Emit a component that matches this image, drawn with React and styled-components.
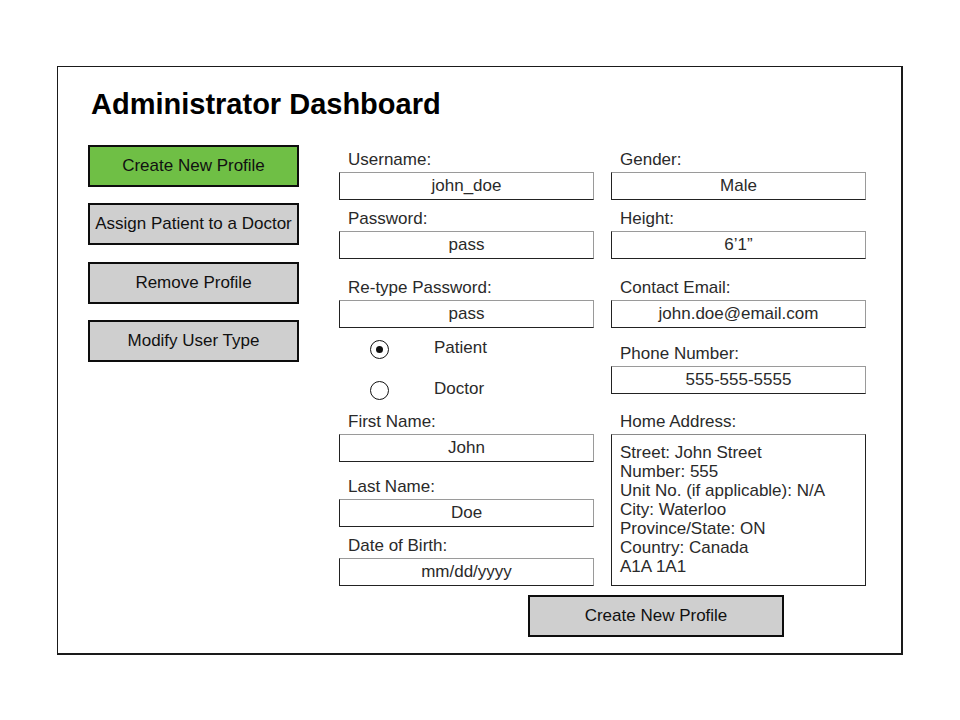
import React from "react";
import styled, { createGlobalStyle } from "styled-components";

const Global = createGlobalStyle`
  html, body { margin: 0; padding: 0; background: #fff; }
  body { font-family: "Liberation Sans", Arial, sans-serif; }
  * { box-sizing: border-box; }
`;

const Page = styled.div`
  width: 960px;
  height: 720px;
  padding: 66px 0 0 57px;
`;

const Frame = styled.div`
  width: 846px;
  height: 589px;
  border: 1px solid #1a1a1a;
  border-right-width: 2px;
  border-bottom-width: 2px;
  padding: 21px 0 0 33px;
  display: flex;
  flex-direction: column;
`;

const Title = styled.h1`
  margin: 0;
  font-size: 29px;
  line-height: 33px;
  font-weight: 700;
  color: #000;
`;

const Body = styled.div`
  display: flex;
  margin-top: 24px;
  margin-left: -3px;
`;

const Sidebar = styled.div`
  width: 211px;
  display: flex;
  flex-direction: column;
  gap: 16px;
`;

const Button = styled.button`
  width: ${(p) => p.$width || 211}px;
  height: 42px;
  border: 2px solid #0d0d0d;
  border-right-width: 2.5px;
  border-bottom-width: 2.5px;
  background: ${(p) => (p.$primary ? "#6fbf45" : "#cfcfcf")};
  font-family: "Liberation Sans", Arial, sans-serif;
  font-size: 17px;
  color: #111;
  padding: 0;
  cursor: pointer;
  margin-top: ${(p) => p.$mt || 0}px;
  margin-left: ${(p) => p.$ml || 0}px;
`;

const Form = styled.div`
  margin-left: 40px;
  padding-top: 5px;
  display: flex;
  flex-direction: column;
`;

const Columns = styled.div`
  display: flex;
  gap: 17px;
`;

const Column = styled.div`
  width: 255px;
  display: flex;
  flex-direction: column;
`;

const Label = styled.div`
  font-size: 17px;
  line-height: 20px;
  color: #2a2a2a;
  padding-left: 9px;
  margin-top: ${(p) => p.$mt || 0}px;
  margin-bottom: 2px;
`;

const Input = styled.div`
  height: 28px;
  border: 1px solid #222;
  border-top-color: #9a9a9a;
  border-right-color: #9a9a9a;
  display: flex;
  align-items: center;
  justify-content: center;
  font-size: 17px;
  color: #2a2a2a;
  background: #fff;
`;

const TextArea = styled.div`
  height: 152px;
  border: 1px solid #222;
  border-top-color: #8a8a8a;
  padding: 8px 8px 0 8px;
  font-size: 17px;
  line-height: 19px;
  color: #2a2a2a;
  white-space: pre-line;
`;

const RadioRow = styled.div`
  height: 20px;
  display: flex;
  align-items: center;
  padding-left: 31px;
  margin-top: ${(p) => p.$mt || 0}px;
  font-size: 17px;
  color: #2a2a2a;
`;

const Circle = styled.span`
  width: 19px;
  height: 19px;
  border-radius: 50%;
  border: 1px solid #111;
  display: flex;
  align-items: center;
  justify-content: center;
  margin-right: 45px;
  margin-top: 2px;
  &::after {
    content: "";
    display: ${(p) => (p.$checked ? "block" : "none")};
    width: 7px;
    height: 7px;
    border-radius: 50%;
    background: #111;
  }
`;

const Field = ({ label, value, mt }) => (
  <>
    <Label $mt={mt}>{label}</Label>
    <Input>{value}</Input>
  </>
);

export default function App() {
  return (
    <Page>
      <Global />
      <Frame>
        <Title>Administrator Dashboard</Title>
        <Body>
          <Sidebar>
            <Button $primary>Create New Profile</Button>
            <Button>Assign Patient to a Doctor</Button>
            <Button $mt={1}>Remove Profile</Button>
            <Button>Modify User Type</Button>
          </Sidebar>
          <Form>
            <Columns>
              <Column>
                <Field label="Username:" value="john_doe" />
                <Field label="Password:" value="pass" mt={9} />
                <Field label="Re-type Password:" value="pass" mt={19} />
                <RadioRow $mt={10}>
                  <Circle $checked />
                  Patient
                </RadioRow>
                <RadioRow $mt={21}>
                  <Circle />
                  Doctor
                </RadioRow>
                <Field label="First Name:" value="John" mt={13} />
                <Field label="Last Name:" value="Doe" mt={15} />
                <Field label="Date of Birth:" value="mm/dd/yyyy" mt={9} />
              </Column>
              <Column>
                <Field label="Gender:" value="Male" />
                <Field label="Height:" value="6’1”" mt={9} />
                <Field label="Contact Email:" value="john.doe@email.com" mt={19} />
                <Field label="Phone Number:" value="555-555-5555" mt={16} />
                <Label $mt={18}>Home Address:</Label>
                <TextArea>
                  {"Street: John Street\nNumber: 555\nUnit No. (if applicable): N/A\nCity: Waterloo\nProvince/State: ON\nCountry: Canada\nA1A 1A1"}
                </TextArea>
              </Column>
            </Columns>
            <Button $width={256} $mt={9} $ml={189}>
              Create New Profile
            </Button>
          </Form>
        </Body>
      </Frame>
    </Page>
  );
}
